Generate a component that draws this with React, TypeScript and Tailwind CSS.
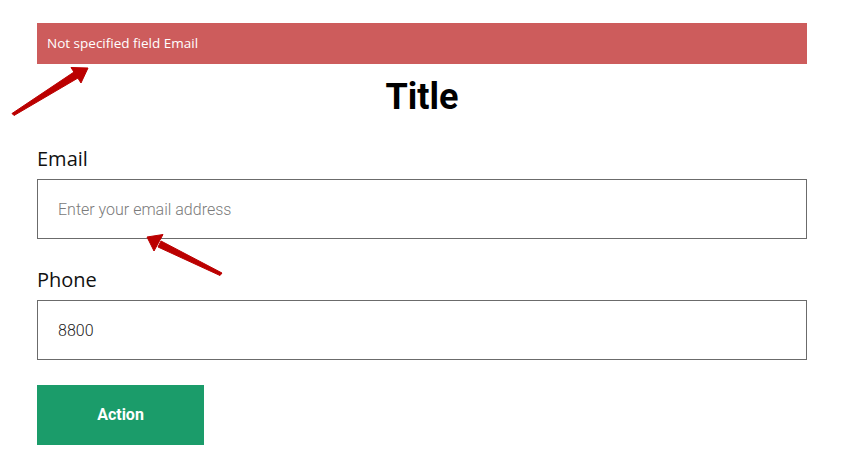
import React from "react";

export default function App() {
  return (
    <div className="relative w-[841px] h-[464px] bg-white overflow-hidden">
      <div className="ml-[37px] w-[770px] pt-[23px]">
        <div
          className="h-[41px] bg-[#cd5c5c] text-white text-[13.5px] pl-[10px] flex items-center"
          style={{ fontFamily: '"Open Sans", sans-serif' }}
        >
          Not specified field Email
        </div>
        <h1
          className="text-center text-[36px] font-bold leading-[44px] mt-[11px] text-black"
          style={{ fontFamily: 'Roboto, sans-serif' }}
        >
          Title
        </h1>
        <div className="mt-[26px]" style={{ fontFamily: '"Open Sans", sans-serif' }}>
          <label className="block text-[20px] leading-[28px] text-[#111]">Email</label>
          <div className="mt-[6px] h-[60px] border border-[#6b6b6b] flex items-center pl-[20px] pt-[2px]">
            <span className="text-[16px] font-light text-[#7a7a7a]" style={{ fontFamily: 'Roboto, sans-serif' }}>
              Enter your email address
            </span>
          </div>
          <label className="block text-[20px] leading-[28px] text-[#111] mt-[27px]">Phone</label>
          <div className="mt-[6px] h-[60px] border border-[#6b6b6b] flex items-center pl-[20px] pt-[2px]">
            <span className="text-[16px] font-light text-[#222]" style={{ fontFamily: 'Roboto, sans-serif' }}>
              8800
            </span>
          </div>
          <button
            className="mt-[25px] w-[167px] h-[60px] bg-[#1b9c6a] text-white text-[16px] font-bold"
            style={{ fontFamily: 'Roboto, sans-serif' }}
          >
            Action
          </button>
        </div>
      </div>
      <svg className="absolute left-0 top-0 pointer-events-none" width="841" height="464">
        <g fill="#bb0000" stroke="#bb0000" strokeWidth="1" strokeLinejoin="round">
          <polygon points="12,113.5 14,115.5 78,78 74,72" />
          <polygon points="88,68 71,67.5 81,83" />
          <polygon points="220,275.5 222,273 161,241 158,247" />
          <polygon points="147,237 163,234.5 154,251" />
        </g>
      </svg>
    </div>
  );
}
